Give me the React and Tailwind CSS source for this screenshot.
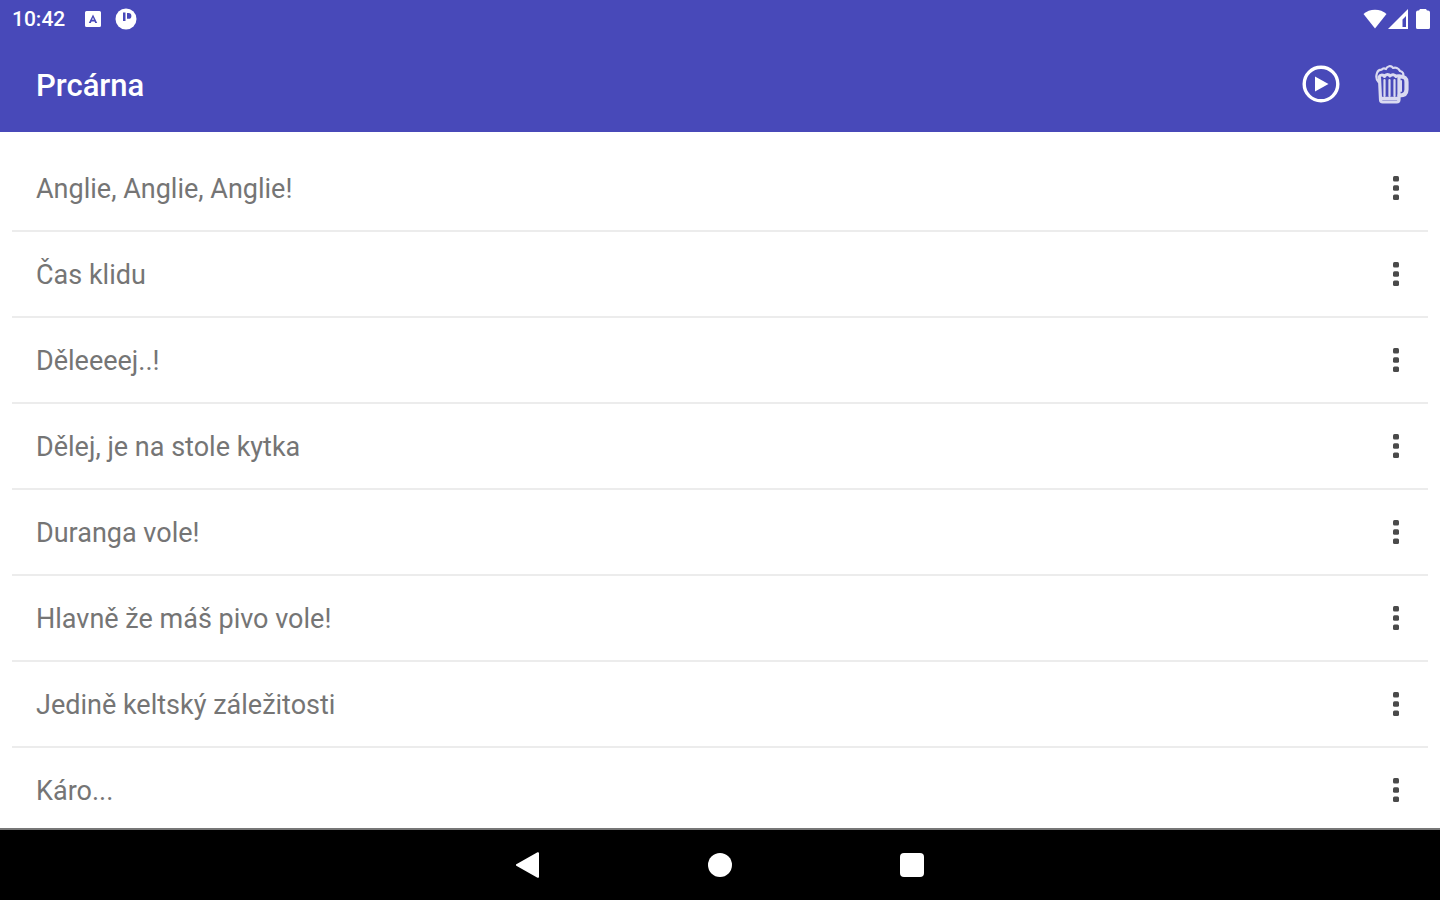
import React from 'react';

const SOUNDS = [
  'Anglie, Anglie, Anglie!',
  'Čas klidu',
  'Děleeeej..!',
  'Dělej, je na stole kytka',
  'Duranga vole!',
  'Hlavně že máš pivo vole!',
  'Jedině keltský záležitosti',
  'Káro...',
];

function StatusBar() {
  return (
    <div className="flex h-9 items-center pt-0.5 pr-2.5 pl-3">
      <span className="text-[21px] leading-7 font-medium">10:42</span>

      {/* Notification icons */}
      <svg viewBox="0 0 16 16" className="ml-5 size-4" fill="currentColor" aria-hidden="true">
        <path
          fillRule="evenodd"
          d="M1.500 0h13A1.500 1.500 0 0 1 16 1.500v13a1.500 1.500 0 0 1-1.500 1.500h-13A1.500 1.500 0 0 1 0 14.500v-13A1.500 1.500 0 0 1 1.500 0ZM8 3.500 3.800 12h2l.7-1.600h3L10.200 12h2L8 3.500Zm0 3 .9 2.200H7.100L8 6.500Z"
        />
      </svg>
      <svg viewBox="0 0 22 22" className="ml-3.5 size-[22px]" aria-hidden="true">
        <circle cx="11" cy="11" r="10.500" fill="currentColor" />
        <path d="M8 4.500h2.500v8.500H8zM12 5h1.500a2.900 2.900 0 0 1 0 5.800H12z" fill="#4849b9" />
      </svg>

      <div className="ml-auto flex items-center">
        <svg viewBox="0 0 24 20" className="h-5 w-6" fill="currentColor" aria-hidden="true">
          <path d="M12 19.500 .5 5C3.500 2.300 7.500 .8 12 .8S20.500 2.300 23.500 5L12 19.500Z" />
        </svg>
        <svg viewBox="0 0 20 20" className="ml-px size-5" fill="currentColor" aria-hidden="true">
          <path fillRule="evenodd" d="M20 0v20H0L20 0Zm-2 7-3.500 3.500V18H18V7Z" />
        </svg>
        <svg viewBox="0 0 14 20" className="ml-2 h-5 w-3.5" fill="currentColor" aria-hidden="true">
          <path d="M4 0h6l1 1.500h1A2 2 0 0 1 14 3.500v15a1.500 1.500 0 0 1-1.500 1.500h-11A1.500 1.500 0 0 1 0 18.500v-15A2 2 0 0 1 2 1.500h1L4 0Z" />
        </svg>
      </div>
    </div>
  );
}

function PlayIcon() {
  return (
    <svg viewBox="0 0 38 38" className="size-[38px]" aria-hidden="true">
      <circle cx="19" cy="19" r="16.800" fill="none" stroke="currentColor" strokeWidth="3.400" />
      <path d="M13 11.500v15L26.500 19 13 11.500Z" fill="currentColor" />
    </svg>
  );
}

function BeerIcon() {
  return (
    <svg
      viewBox="0 0 36 40"
      className="h-10 w-9"
      fill="none"
      stroke="currentColor"
      strokeLinecap="round"
      strokeLinejoin="round"
      aria-hidden="true"
    >
      <g opacity="0.800">
        {/* foam */}
        <path
          strokeWidth="2.200"
          d="M4.500 18C2.500 16 2 12 3 9c.8-2.500 2.500-3.300 4.500-3.300C9 4 11 4.500 12 5 13 2 17 1 19 4c3-1 6 .5 7 3 2.500.5 4 2.500 3 5"
        />
        <path strokeWidth="3" d="M5 13c1.500-3 4.500-2.500 5.500-.5 1.500-3 4.500-2.500 5.500-.5 2-2 4.500-1.500 6 .5 1.500-1 3-1 4.500 0" />
        {/* glass */}
        <path strokeWidth="3.200" d="M5.500 14 6.500 35.500c0 1.500 1 2.500 2.200 2.500h14c1.200 0 2.300-1 2.300-2.500V14" />
        <path strokeWidth="3.500" d="M8 34.500h16" />
        <path strokeWidth="2.200" d="M10.500 16v16M15.500 16v16M20.500 16v16" />
        {/* handle */}
        <path strokeWidth="4.200" d="M26 12.500c4.500 0 6.500 1.500 6.500 5.500v7.500c0 4-2.500 6-7 6" />
        <path strokeWidth="2" d="M27 17v10" />
      </g>
    </svg>
  );
}

function AppBar() {
  return (
    <div className="flex h-24 items-center pr-[30px] pl-9">
      <h1 className="pt-1 text-[31px] leading-9 font-medium">Prcárna</h1>
      <div className="ml-auto flex items-center gap-[34px]">
        <button type="button" aria-label="Přehrát">
          <PlayIcon />
        </button>
        <button type="button" aria-label="Pivo">
          <BeerIcon />
        </button>
      </div>
    </div>
  );
}

function SoundRow({ title }) {
  return (
    <li className="flex h-[86px] shrink-0 items-center justify-between border-b-2 border-[#ececec] pr-5 pl-6">
      <span className="pt-0.5 text-[27px] leading-8 text-[#757575]">{title}</span>
      <button type="button" aria-label={`Možnosti: ${title}`} className="flex h-12 w-6 items-center justify-center">
        <svg viewBox="0 0 6 24" className="h-6 w-1.5" fill="#4a4a4a" aria-hidden="true">
          <rect y="0" width="6" height="5.500" rx="1.500" />
          <rect y="9.200" width="6" height="5.500" rx="1.500" />
          <rect y="18.400" width="6" height="5.500" rx="1.500" />
        </svg>
      </button>
    </li>
  );
}

function NavigationBar() {
  return (
    <nav className="flex h-[72px] items-center justify-center gap-[168px] border-t-2 border-[#777777] bg-black text-white">
      <button type="button" aria-label="Zpět">
        <svg viewBox="0 0 24 26" className="h-[26px] w-6" fill="currentColor" aria-hidden="true">
          <path d="M21.500 .3c.8-.4 1.500 0 1.500.9v23.600c0 .9-.7 1.300-1.500.9L.3 13.800c-.8-.4-.8-1.200 0-1.600L21.500 .3Z" />
        </svg>
      </button>
      <button type="button" aria-label="Domů" className="size-6 rounded-full bg-white" />
      <button type="button" aria-label="Přehled" className="size-6 rounded-sm bg-white" />
    </nav>
  );
}

export default function App() {
  return (
    <div className="flex h-screen flex-col bg-white font-[Roboto,'Liberation_Sans',sans-serif]">
      <header className="bg-[#4849b9] text-white">
        <StatusBar />
        <AppBar />
      </header>
      <main className="min-h-0 flex-1 overflow-hidden px-3 pt-3.5">
        <ul>
          {SOUNDS.map((title) => (
            <SoundRow key={title} title={title} />
          ))}
        </ul>
      </main>
      <NavigationBar />
    </div>
  );
}
